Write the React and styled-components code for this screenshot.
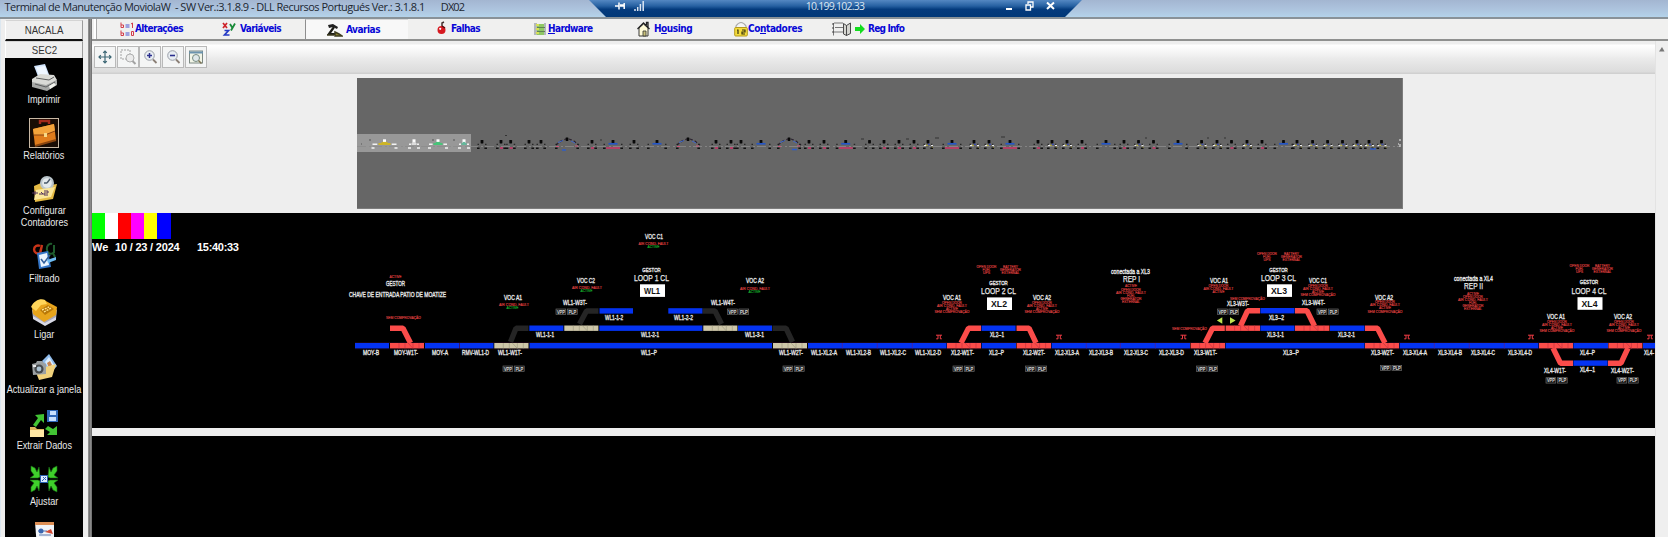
import React from "react";
import styled, { createGlobalStyle, css } from "styled-components";

const Global = createGlobalStyle`
  *{box-sizing:border-box}
  html,body,#root{height:100%}
  body{margin:0;overflow:hidden;background:#eeeeee;font-family:"Liberation Sans",Arial,sans-serif}
  svg{display:block;flex:none}
`;

const Screen = styled.div`display:flex;flex-direction:column;height:537px;width:1668px;overflow:hidden;`;

/* title bar */
const TitleBar = styled.header`
  display:grid;grid-template-columns:589px 493px 1fr;height:19px;flex:none;
  background:linear-gradient(#a3b6d1,#adc4de 55%,#b4d3ea);
  border-bottom:2px solid #899298;
`;
const Caption = styled.div`
  display:flex;align-items:center;gap:16px;height:14px;padding-left:4.5px;color:#1c2630;
  font:11px/14px "Open Sans","Noto Sans",sans-serif;white-space:pre;
`;
const CaptionText = styled.span`letter-spacing:${p => p.$ls}px;`;
const Connection = styled.div`
  display:grid;grid-template-columns:1fr 80px 1fr;height:17px;padding:0 27px 0 26px;
  background:linear-gradient(#5488c2,#2761a2 35%,#043b7d 55%,#003878);
  clip-path:polygon(0 0,100% 0,476px 100%,17px 100%);
  color:#dce6f2;
`;
const Address = styled.div`
  font:10.5px/12px "Open Sans",sans-serif;text-align:center;white-space:nowrap;letter-spacing:-.75px;
`;
const ConnTools = styled.div`
  display:flex;gap:${p => p.$gap}px;height:11px;align-items:center;
  justify-content:${p => (p.$end ? "flex-end" : "flex-start")};
`;

/* body */
const Body = styled.div`display:flex;flex:1;min-height:0;`;
const Sidebar = styled.aside`
  display:flex;flex-direction:column;width:88px;flex:none;padding:1px 5px 0 4px;
  background:#eeeeee;border-left:1px solid #dce7f0;
`;
const Station = styled.div`
  height:${p => p.$h}px;flex:none;display:flex;align-items:center;justify-content:center;
  background:#efefef;border:1px solid #9c9c9c;border-left-color:#fff;border-top-color:#d4d4d4;
  border-bottom:${p => (p.$rule ? "2px solid #111" : "0")};
  font-size:11px;line-height:12px;color:#333;padding-bottom:${p => (p.$rule ? 0 : 1)}px;
  & > span{transform:scaleX(.88);}
`;
const ActionList = styled.nav`
  flex:1;min-height:0;overflow:hidden;background:#000;padding-top:4px;
  display:flex;flex-direction:column;align-items:center;
`;
const Action = styled.div`
  display:flex;flex-direction:column;align-items:center;flex:none;gap:1px;padding-bottom:12.7px;
`;
const ActionIcon = styled.div`
  width:30px;height:30px;border:1px solid ${p => (p.$selected ? "#c8b8a4" : "transparent")};
`;
const ActionLabel = styled.div`
  color:#e9e9e9;font-size:11px;line-height:12px;text-align:center;white-space:pre;transform:scaleX(.83);
`;
const Splitter = styled.div`
  width:4px;flex:none;background:linear-gradient(90deg,#a8a8a8,#6c6c6c 30%,#8c8c8c 60%,#6a6a6a);
`;
const Main = styled.main`display:flex;flex-direction:column;flex:1;min-width:0;`;

/* tabs */
const Tabs = styled.div`
  display:flex;height:22px;flex:none;background:#f0f0ef;border-bottom:2px solid #8f908f;padding-left:2px;
  &::before{content:"";width:2px;background:#fff;border-right:1px solid #aaa;margin-right:-2px;}
`;
const Tab = styled.div`
  display:flex;align-items:center;width:${p => p.$w}px;padding-left:${p => p.$pad}px;gap:${p => p.$gap}px;
  flex:none;
  ${p => p.$active && css`background:#f8f8f8;border-left:1px solid #8e8e8e;border-top:1px solid #d8d8d8;`}
`;
const TabText = styled.span`
  font:bold 10px/14px "DejaVu Sans Condensed","DejaVu Sans",sans-serif;color:#0707d6;white-space:nowrap;
  letter-spacing:${p => p.$ls || -0.6}px;
  u{text-decoration:underline;text-underline-offset:1px;}
`;

/* toolbar */
const Work = styled.div`display:flex;flex:1;min-height:0;`;
const Column = styled.div`display:flex;flex-direction:column;width:1562.5px;flex:none;`;
const Toolbar = styled.div`
  display:flex;gap:.7px;height:33px;flex:none;padding:5px 0 0 2px;
  background:linear-gradient(#eee 0 3px,#fff 4px,#f7f7f7 10px,#eaeaea 18px,#e3e3e3 24px,#dcdcdc 31px,#d0d0d0 32px);
`;
const Tool = styled.div`
  width:22px;height:22px;display:flex;align-items:center;justify-content:center;
  background:#f4f5f5;border:1px solid #b9b9b9;
`;
const ScrollRail = styled.div`
  flex:1;display:flex;justify-content:center;padding-top:5px;background:#efefef;border-left:1px solid #e3e3e3;
`;

/* panels */
const OverviewArea = styled.div`
  height:139px;flex:none;padding:4px 0 0 265px;background:#eee;
`;
const Overview = styled.div`
  width:1046px;height:131px;background:#666;border:1px solid #7c7c7c;border-width:0 1px 1px 0;overflow:hidden;
`;
const Canvas = styled.section`
  display:grid;height:215px;flex:none;background:#000;overflow:hidden;
  & > *{grid-area:1/1;}
`;
const CanvasHeader = styled.div`display:flex;flex-direction:column;`;
const Palette = styled.div`display:flex;height:26px;`;
const Swatch = styled.div`width:13.1px;background:${p => p.$c};`;
const Clock = styled.div`
  display:flex;height:15px;color:#fff;font:bold 11px/16px "Liberation Sans",sans-serif;white-space:pre;
`;
const ClockPart = styled.span`width:${p => p.$w}px;letter-spacing:${p => p.$ls}px;`;
const LowerCanvas = styled.section`flex:1;background:#000;margin-top:8px;`;

const tones = { white: "#e9e9e9", red: "#e04442", green: "#18b82e", black: "#111" };
const Note = styled.text`
  font-family:"Liberation Sans",Arial,sans-serif;font-size:${p => p.$s}px;
  font-weight:${p => (p.$b ? 700 : 400)};fill:${p => tones[p.$t]};text-anchor:middle;
  stroke:${p => tones[p.$t]};stroke-width:${p => (p.$b ? 0 : p.$s > 8 ? 0.25 : p.$s > 5 ? 0.32 : 0.12)}px;
`;

const BLUE = "#0433f2", RED = "#fb4c4a", BEIGE = "#cdc6a8", DARK = "#252525";

function T({ x1, x2, y, s = 6.6, t = "white", b, children }) {
  return (
    <Note $s={s} $t={t} $b={b} x={(x1 + x2) / 2} y={y + s * 0.36}
      textLength={x2 - x1} lengthAdjust="spacingAndGlyphs">{children}</Note>
  );
}

const segments = [
  [355, 389, 343, BLUE], [390, 424, 343, RED], [425, 459, 343, BLUE], [460, 493.5, 343, BLUE],
  [494.3, 528.5, 343, BEIGE], [529.5, 772, 343, BLUE], [773, 807, 343, BEIGE],
  [808, 842, 343, BLUE], [842, 877, 343, BLUE], [877, 912, 343, BLUE], [912, 946.5, 343, BLUE],
  [947, 981, 343, RED], [981.7, 1016, 343, BLUE], [1016.6, 1051, 343, RED],
  [1051.6, 1086.2, 343, BLUE], [1086, 1120.2, 343, BLUE], [1120, 1155.2, 343, BLUE], [1155, 1190, 343, BLUE],
  [1190.6, 1225, 343, RED], [1225.6, 1364.5, 343, BLUE], [1365, 1399, 343, RED],
  [1399.6, 1434.2, 343, BLUE], [1434, 1469.2, 343, BLUE], [1469, 1504.2, 343, BLUE], [1504, 1538.4, 343, BLUE],
  [1539, 1573, 343, RED], [1573.4, 1608, 343, BLUE], [1608.4, 1642.4, 343, RED], [1643, 1655, 343, BLUE],
  [529.3, 563.4, 325.5, BLUE], [564.3, 598.4, 325.5, BEIGE], [599.3, 702.4, 325.5, BLUE],
  [703.3, 737.4, 325.5, BEIGE], [738, 772, 325.5, BLUE],
  [599.5, 633, 308.2, BLUE], [668.3, 702.4, 308.2, BLUE],
  [981.5, 1015.6, 325.5, BLUE],
  [1225.6, 1260, 325.5, RED], [1260.4, 1294.5, 325.5, BLUE], [1295, 1329.4, 325.5, RED], [1330, 1364.5, 325.5, BLUE],
  [1260.4, 1294.5, 308, BLUE], [1573.4, 1607.6, 360.4, BLUE],
];

/* switch legs: stub start, knee, foot */
const legs = [
  [390, 328.2, 403, 410.5, 343, RED],
  [528.5, 328.2, 516, 510.5, 342, DARK],
  [598.5, 311, 586.5, 579.5, 324, DARK],
  [702.5, 311, 715, 721.5, 324, DARK],
  [772.5, 328.2, 786, 792.5, 342, DARK],
  [981, 328.2, 968.5, 961, 343, RED],
  [1016.5, 328.2, 1029, 1036, 343, RED],
  [1224.8, 328.2, 1212.5, 1205, 343, RED],
  [1260, 310.8, 1247.5, 1240.5, 326, RED],
  [1295, 310.8, 1307, 1314.5, 326, RED],
  [1365, 328.2, 1377.5, 1385, 343, RED],
  [1573, 363.2, 1560.5, 1553, 348, RED],
  [1608, 363.2, 1621, 1628, 348, RED],
];

const names = [
  ["MOY-B", 363, 379, 352.7], ["MOY-W1T-", 394, 418, 352.7], ["MOY-A", 432, 448, 352.7], ["RMV-WL1-D", 462, 489, 352.5],
  ["WL1-W1T-", 498, 522, 352.3], ["WL1--P", 641, 657, 352.7], ["WL1-W2T-", 779, 803, 352.3],
  ["WL1-1-1", 536, 554, 334.6], ["WL1-2-1", 641, 659, 334.6], ["WL1-3-1", 745, 764, 334.6],
  ["WL1-1-2", 605, 623, 317.2], ["WL1-2-2", 674, 693, 317.2], ["WL1-W3T-", 563, 587, 303], ["WL1-W4T-", 711, 735, 303],
  ["WL1-XL2-A", 811, 837, 352.4], ["WL1-XL2-B", 846, 871, 352.4], ["WL1-XL2-C", 880, 906, 352.4], ["WL1-XL2-D", 915, 941, 352.4],
  ["XL2-W1T-", 951, 974, 352.2], ["XL2--P", 989, 1004, 352.2], ["XL2-W2T-", 1023, 1045, 352.5],
  ["XL2-XL3-A", 1055, 1079, 352.4], ["XL2-XL3-B", 1089, 1113, 352.4], ["XL2-XL3-C", 1124, 1148, 352.4], ["XL2-XL3-D", 1159, 1184, 352.4],
  ["XL3-W1T-", 1194, 1217, 352.4], ["XL3--P", 1283, 1299, 352.4], ["XL3-W2T-", 1371, 1394, 352.6],
  ["XL3-XL4-A", 1403, 1427, 352.4], ["XL3-XL4-B", 1438, 1462, 352.4], ["XL3-XL4-C", 1471, 1495, 352.4], ["XL3-XL4-D", 1508, 1532, 352.4],
  ["XL4--P", 1580, 1595, 352.2], ["XL4-", 1644, 1654, 352.4],
  ["XL4-W1T-", 1544, 1566, 370.2], ["XL4--1", 1580, 1595, 369.6], ["XL4-W2T-", 1611, 1634, 370.2],
  ["XL2--1", 990, 1004, 334.8], ["XL3--2", 1269, 1284, 317.2], ["XL3-1-1", 1267, 1284, 334.8], ["XL3-2-1", 1338, 1355, 334.8],
  ["XL3-W3T-", 1227, 1249, 303.2], ["XL3-W4T-", 1302, 1325, 302.8],
  ["GESTOR", 386, 405, 283.4], ["CHAVE DE ENTRADA PATIO DE MOATIZE", 349, 446, 294.8],
  ["VOC C1", 645, 663, 236.5], ["VOC C2", 577, 595, 280.6], ["VOC A2", 746, 764, 280.6], ["VOC A1", 504, 522, 297.6],
  ["VOC A1", 943, 961, 297.8], ["VOC A2", 1033, 1051, 297.8], ["VOC A1", 1210, 1228, 281], ["VOC C1", 1309, 1327, 281],
  ["VOC A2", 1375, 1393, 297.6], ["VOC A1", 1547, 1565, 317], ["VOC A2", 1614, 1632, 317],
  ["conectada a XL3", 1111, 1150, 271.8], ["conectada a XL4", 1454, 1493, 279],
];

const loops = [
  ["1", "WL1", 651.5, 277.5], ["2", "XL2", 998.5, 290.6], ["3", "XL3", 1278.5, 277.5], ["4", "XL4", 1589, 290.4],
];

const plates = [
  [503, 366], [783, 366], [556, 309], [727.5, 309], [953, 366], [1025.5, 366], [1196.5, 366],
  [1217.5, 309], [1317, 309], [1380.5, 365.3], [1546, 377.7], [1617, 377.7],
];

const alarms = [
  [395.5, 276.6, ["ACTIVE"]], [403.5, 317.4, ["SEM COMPROVAÇÃO"]],
  [653.5, 244, ["AIR COND. FAULT"]], [587, 288, ["AIR COND. FAULT"]], [755, 288.4, ["AIR COND. FAULT"]], [514, 304.6, ["AIR COND. FAULT"]],
  [986.5, 266.6, ["OPEN DOOR", "FUEL", "UPS"]], [1010.5, 266.6, ["BATTERY", "GENERATOR", "EXTERNAL"]],
  [1267, 253.6, ["OPEN DOOR", "FUEL", "UPS"]], [1291.5, 253.6, ["BATTERY", "GENERATOR", "EXTERNAL"]],
  [1579.5, 265.5, ["OPEN DOOR", "FUEL", "UPS"]], [1602.5, 265.5, ["BATTERY", "GENERATOR", "EXTERNAL"]],
  [952, 302.4, ["OPEN DOOR", "AIR COND. FAULT", "ACTIVE", "SEM COMPROVAÇÃO"]],
  [1042, 302.4, ["OPEN DOOR", "AIR COND. FAULT", "ACTIVE", "SEM COMPROVAÇÃO"]],
  [1131, 286.2, ["ACTIVE", "OPEN DOOR", "AIR COND. FAULT", "FUEL", "GENERATOR", "EXTERNAL"]],
  [1473, 293.4, ["ACTIVE", "OPEN DOOR", "AIR COND. FAULT", "FUEL", "GENERATOR", "EXTERNAL"]],
  [1218.5, 285.4, ["OPEN DOOR", "AIR COND. FAULT", "ACTIVE"]], [1247.5, 298.7, ["SEM COMPROVAÇÃO"]],
  [1189.5, 328.5, ["SEM COMPROVAÇÃO"]],
  [1318, 285.4, ["OPEN DOOR", "AIR COND. FAULT", "ACTIVE", "SEM COMPROVAÇÃO"]],
  [1385, 302, ["OPEN DOOR", "AIR COND. FAULT", "ACTIVE", "SEM COMPROVAÇÃO"]],
  [1557, 321.4, ["OPEN DOOR", "AIR COND. FAULT", "ACTIVE", "SEM COMPROVAÇÃO"]],
  [1624, 321.4, ["OPEN DOOR", "AIR COND. FAULT", "ACTIVE", "SEM COMPROVAÇÃO"]],
];
const alarmWidth = {
  "ACTIVE": 12, "OPEN DOOR": 20, "AIR COND. FAULT": 30, "SEM COMPROVAÇÃO": 35, "FUEL": 8, "UPS": 7,
  "BATTERY": 15, "GENERATOR": 21, "EXTERNAL": 18,
};
const running = [[653.5, 247.2], [586.5, 291.2], [754.5, 291.4], [512.5, 307.7]];
const signals = [936, 1056, 1180.5, 1404, 1528, 1647];

function Schematic() {
  return (
    <svg width="1563" height="215" viewBox="92 213 1563 215">
      <path d="M355 342.6H1655M355 348.9H1655" stroke="#2a0820" strokeWidth=".6" />
      {legs.map(([x, y, k, f, fy, c], i) => (
        <path key={i} d={`M${x} ${y}H${k}L${f} ${fy}`} fill="none" stroke={c} strokeWidth="5.4" strokeLinejoin="bevel" />
      ))}
      {segments.map(([a, b, y, c], i) => (
        <g key={i}>
          <rect x={a} y={y} width={b - a} height="5.4" fill={c} />
          {(c === RED || c === BEIGE) && (
            <path d={`M${a + 9} ${y}v5.4M${a + 15} ${y}v5.4M${a + 18} ${y}l5 5.4M${a + 23} ${y}v5.4M${a + 29} ${y}v5.4`}
              stroke={c === RED ? "#c03040" : "#99957c"} strokeWidth=".6" />
          )}
        </g>
      ))}
      {[459.5, 842.3, 877.3, 912.3, 1086.3, 1120.3, 1155.3, 1434.3, 1469.3, 1504.3].map(x => (
        <path key={x} d={`M${x} 343v5.4`} stroke="#5a1c8c" strokeWidth=".7" />
      ))}
      {names.map(([n, a, b, y], i) => <T key={i} x1={a} x2={b} y={y}>{n}</T>)}
      {loops.map(([n, id, x, y]) => (
        <g key={id}>
          <T x1={x - 9.2} x2={x + 9.2} y={y - 8.1} s={6}>GESTOR</T>
          <T x1={x - 17.5} x2={x + 17.5} y={y} s={8.8}>{`LOOP ${n} CL`}</T>
          <rect x={x - 11.5} y={y + 6.8} width="25" height="12.6" fill="#fff" />
          <T x1={x - 7.5} x2={x + 8.5} y={y + 13.2} s={8.8} b t="black">{id}</T>
        </g>
      ))}
      <T x1={1123} x2={1140} y={278.7} s={8.8}>REP I</T>
      <T x1={1464} x2={1483} y={285.7} s={8.8}>REP II</T>
      {plates.map(([x, y], i) => (
        <g key={i}>
          {["VPP", "PLP"].map((n, k) => (
            <g key={n}>
              <rect x={x + k * 11.4} y={y} width="9.8" height="5.4" fill="#151515" stroke="#777" strokeWidth=".6" />
              <T x1={x + k * 11.4 + 1} x2={x + k * 11.4 + 8.8} y={y + 2.7} s={5}>{n}</T>
            </g>
          ))}
        </g>
      ))}
      {alarms.map(([x, y, lines]) => lines.map((l, i) => (
        <T key={x + l} x1={x - alarmWidth[l] / 2} x2={x + alarmWidth[l] / 2} y={y + i * 3.1} s={3.5} t="red">{l}</T>
      )))}
      {running.map(([x, y]) => <T key={x} x1={x - 6} x2={x + 6} y={y} s={3.5} t="green">ACTIVE</T>)}
      {signals.map(x => (
        <path key={x} d={`M${x} 335.2h6M${x + 2} 335.2v3.6h-1.8M${x + 4.3} 335.2v3.6h1.5`} fill="none" stroke="#f03c44" strokeWidth="1" />
      ))}
      <path d="M1222.3 317.2v6.600l-5.400-3.300zM1230 317.2v6.600l5.600-3.300z" fill="#c0e450" />
    </svg>
  );
}

/* x centre, kind: 0 plain, 1 blue, 2 blue/pink, 3 arc, 4 yellow feet, 5 pink */
const stations = [
  [482, 0], [501, 5], [510.7, 5], [529, 0], [541, 0], [567, 3], [592, 5], [613, 2], [634, 0], [657, 1], [688, 3],
  [716, 5], [731, 5], [741, 0], [761, 1], [789, 3], [809, 5], [824, 5], [845.7, 2], [869.5, 0], [884, 5], [899, 5],
  [914, 5], [928, 4], [952, 2], [974, 4], [989, 4], [1010, 2], [1038, 5], [1052, 4], [1067, 4], [1082, 5], [1106, 1],
  [1124, 5], [1138.5, 4], [1153.5, 5], [1178, 1], [1201.6, 4], [1217, 4], [1231.5, 5], [1247, 4], [1262, 5],
  [1283.5, 1], [1297, 4], [1312.6, 4], [1327.6, 4], [1342.5, 4], [1357, 4], [1369, 4], [1381.5, 4],
];
const lit = [[384.5, "#cdb528", 12], [414, "#dcdcdc", 5], [438, "#48c478", 9], [464, "#65b89c", 5]];

function OverviewMap() {
  return (
    <svg width="1046" height="130" viewBox="357 78 1046 130">
      <rect x="357" y="134" width="114" height="18" fill="#989898" />
      <path d="M357 146.5H1400" stroke="#8c8c8c" strokeWidth=".8" strokeDasharray="9 3 2 2" />
      <path d="M369 140h2M432 140h2M453 140h2M361 144h1M380 151" stroke="#555" />
      {lit.map(([x, c, w]) => (
        <g key={x}>
          <rect x={x - 1.5} y="139.300" width="3" height="3.600" fill="#fff" />
          <path d={`M${x - w} 144.200h${w / 2.5}M${x + w * 0.6} 144.200h${w / 2.5}M${x - w - 1} 148h3M${x + w - 2} 148h3`} stroke="#f2f2f2" strokeWidth="1.400" />
          <path d={`M${x - w / 2} 144h${w}`} stroke={c} strokeWidth="2" />
          <path d={`M${x - w / 4} 142.500h${w / 2}`} stroke={c} strokeWidth="1.200" />
        </g>
      ))}
      {stations.map(([x, k]) => {
        const wide = k === 1 || k === 2, w = wide ? 10 : k === 3 ? 12 : 5;
        return (
          <g key={x}>
            <rect x={x - 1.4} y={k === 3 ? 137.500 : 140} width="2.800" height="3.400" rx=".6" fill="#080808" />
            {k === 3 && <path d={`M${x - 11} 145l5-4 5-2M${x + 2} 139l5 2 5 4`} fill="none" stroke="#2c2430" strokeWidth="1.300" strokeDasharray="3 2" />}
            {k === 3 && <path d={`M${x - 9} 142.500l5-2M${x + 4} 141l4 2`} stroke="#3f66c8" strokeWidth="1" />}
            {k === 3 && <path d={`M${x - 11} 146.500h3M${x + 8} 146h3`} stroke="#d0567a" strokeWidth="1" />}
            {wide && <path d={`M${x - 4.5} 143.800h9`} stroke="#2455c6" strokeWidth="1.700" />}
            {(k === 2 || k === 5) && <path d={`M${x - (wide ? 7 : 1)} 148h${wide ? 14 : 3}`} stroke="#c23a68" strokeWidth="1.700" />}
            {k === 4 && <path d={`M${x - 4} 145.300h2M${x + 3} 145.300h2`} stroke="#e8e8e8" strokeWidth="1.200" />}
            {k === 4 && <path d={`M${x - 2} 145.300h1.600M${x + 4} 147.300h1`} stroke="#bcb53c" strokeWidth="1.200" />}
            {k === 4 && <path d={`M${x} 144.300h2`} stroke="#3c50b4" strokeWidth="1.200" />}
            <path d={`M${x - w} 148.200h2.600M${x + w - 2.6} 148.200h2.600`} stroke="#101010" strokeWidth="1.400" />
            <path d={`M${x - w + 0.5} 144.300h1.500M${x + w - 2} 144.300h1.500`} stroke="#181818" strokeWidth="1" />
          </g>
        );
      })}
      <path d="M505 135.500h2M600 140h2M861 139h3M906 139h3M935 138h4M1001 137h4M1145 138h2M1207 138h2M1224 138h2" stroke="#333" />
      <path d="M1399 140h2M1398 144h1M1400 144v3" stroke="#eee" />
      <path d="M562 150h4M792 149.500h5M1370 149h6" stroke="#2f5ec8" strokeWidth="1.500" />
    </svg>
  );
}

/* sidebar drawings, 28 x 28 */
const art = {
  print: (
    <g>
      <path d="M4 3l11-2 5 13-11 2z" fill="#cfe3fb" /><path d="M6 4l9-1 3 9-9 1z" fill="#eef6ff" />
      <path d="M2 16l8-5 14 1 3 5-10 7L2 20z" fill="#d9dad6" /><path d="M2 19l14 3 11-5v5l-10 6L2 24z" fill="#a6a8a6" />
      <path d="M6 15l13 2 5-3M5 21l11 3 9-5" stroke="#5d5f60" fill="none" /><path d="M19 23l5-3 2 2-6 4z" fill="#f2f3ee" />
    </g>
  ),
  report: (
    <g>
      <rect width="28" height="28" fill="#1a0d05" /><path d="M10 5V2h9v3" fill="none" stroke="#a3281b" strokeWidth="2.4" />
      <path d="M3 10L24 5l2 16L5 27z" fill="#e07c1c" /><path d="M3 10L24 5l1 7-10 4L4 16z" fill="#f4a43c" />
      <path d="M4 16l11 0 10-4" fill="none" stroke="#8a4210" /><path d="M5 27l21-6" stroke="#8c460f" strokeWidth="2" />
      <path d="M14 14h3v4h-3z" fill="#f7d987" />
    </g>
  ),
  counters: (
    <g transform="translate(1 2)">
      <path d="M3 10l7-3 3 3 13-2-4 15-18 3z" fill="#e5bb45" /><circle cx="16" cy="7" r="7" fill="#b9c4ca" />
      <circle cx="16" cy="7" r="4.800" fill="#e3e9ec" /><path d="M16 7l3-4M16 7h-3" stroke="#49596a" strokeWidth="1.400" />
      <path d="M5 14l19-3-4 10-17 3z" fill="#fbe79b" /><path d="M1 17h6M4 15v4M8 18h4l-2-2M13 15h4v2h-4v2h4" stroke="#51305c" fill="none" />
    </g>
  ),
  filter: (
    <g>
      <path d="M10 4a4 4 0 1 0 0 7l2-8-2 9h3" fill="none" stroke="#c93418" strokeWidth="2.4" />
      <path d="M22 2a4 5 0 1 0 1 9l2 4M24 3v8" fill="none" stroke="#1f5d2d" strokeWidth="2" />
      <path d="M7 11l11-2 3 16-12 2z" fill="#3577c9" /><path d="M9 13l8-2 2 12-8 2z" fill="#ecf5ff" />
      <path d="M11 17l3 4 6-8" fill="none" stroke="#315f9d" strokeWidth="1.6" /><path d="M17 18l9-3v3l-8 3z" fill="#6dbaf0" />
    </g>
  ),
  dial: (
    <g>
      <path d="M2 12L15 4l12 8-1 9-11 6L3 20z" fill="#aaa8b9" /><path d="M2 10L14 2l13 7-1 8-12 7L3 16z" fill="#e8a51c" />
      <path d="M1 9c3-7 10-9 14-7l2 4-6 1-5 6z" fill="#ffd65a" /><path d="M10 12l8-5 6 4-9 6z" fill="#b97808" />
      <path d="M12 12l7-3M14 14l7-4" stroke="#ffe58e" strokeDasharray="2 1" strokeWidth="1.4" /><path d="M3 18l12 7 11-6v3l-11 6-12-7z" fill="#d8d9e5" />
    </g>
  ),
  camera: (
    <g>
      <path d="M12 8L19 1l8 12-7 8z" fill="#90bcec" /><path d="M15 9l4-5 5 8-4 5z" fill="#dceefe" />
      <path d="M17 10l3-2 2 4-3 3z" fill="#c78452" /><path d="M5 17l21-6-4 13-13 3z" fill="#f1d27c" />
      <path d="M2 11l4-1 1-2 5 0 2 2 2 1v10l-13 1z" fill="#9ba0a2" /><circle cx="9" cy="16" r="4.6" fill="#464a4d" />
      <circle cx="9" cy="16" r="2.4" fill="#abc2d2" /><rect x="3" y="12" width="3" height="2" fill="#e8e8e8" />
    </g>
  ),
  extract: (
    <g>
      <path d="M17 1h11v12H17z" fill="#2e67b9" /><path d="M20 2h6v4h-6zM19 8h7v4h-7z" fill="#c6dfff" />
      <path d="M5 6l9-1v9l-3-3-5 7-3-2 5-7z" fill="#42c434" /><path d="M27 26H17l3-3-5-3 3-3 5 3 4-3z" fill="#42c434" />
      <path d="M0 18h5l2 2h7v8H0z" fill="#dfb65f" /><path d="M0 21h14v7H0z" fill="#ffe8a5" />
    </g>
  ),
  adjust: (
    <g>
      {["", "matrix(-1 0 0 1 28 0)", "matrix(1 0 0 -1 0 28)", "matrix(-1 0 0 -1 28 28)"].map(m => (
        <path key={m} transform={m || undefined} d="M1 1l4 2 2 4 2-5 1 10-2 1H0l4-3-3-4z" fill="#3fd02b" stroke="#176d14" strokeWidth=".6" />
      ))}
      <rect x="10.5" y="10.5" width="7" height="7" fill="#dcecff" stroke="#2b62b2" /><path d="M12 16l4-4M13 12l3 3" stroke="#2b62b2" />
    </g>
  ),
  page: (
    <g>
      <path d="M5 1h19v26H7z" fill="#f1f4f8" /><path d="M5 1h19v3H5z" fill="#dd8e54" /><path d="M8 10h9M9 14h12" stroke="#8aa0c8" strokeWidth="1.600" />
      <path d="M15 11l6-3 2 5" fill="#d34b36" /><circle cx="11" cy="10" r="2.500" fill="#3a66b0" />
    </g>
  ),
};

const actions = [
  ["print", "Imprimir"], ["report", "Relatórios", true], ["counters", "Configurar\nContadores"], ["filter", "Filtrado"],
  ["dial", "Ligar"], ["camera", "Actualizar a janela"], ["extract", "Extrair Dados"], ["adjust", "Ajustar"], ["page", ""],
];

/* tab drawings */
const Glyph = ({ w, h = 16, children }) => <svg width={w} height={h} viewBox={`0 0 ${w} ${h}`}>{children}</svg>;
const tabArt = {
  alt: (
    <Glyph w={14}>
      <path d="M1 1.500v5h2.500V4H1M1 9.500v5h2.500V12H1M11 3l1.500-1v5M11.500 10.500h2v4h-2z" fill="none" stroke="#d33c48" strokeWidth="1" />
      <path d="M5.500 4h4M5.500 6h4M5.500 12h4M5.500 14h4" stroke="#4b52cf" strokeWidth="1" />
    </Glyph>
  ),
  vars: (
    <Glyph w={14}>
      <path d="M1 2l4 5M5 2l-4 5" stroke="#ce242b" strokeWidth="1.700" />
      <path d="M8 3l2.500 4M13 2.500l-4 7" stroke="#198b38" strokeWidth="1.800" />
      <path d="M2.500 9.500h4l-4 4.500h5" fill="none" stroke="#2339c5" strokeWidth="1.700" />
    </Glyph>
  ),
  faults: (
    <Glyph w={17}>
      <path d="M2 3l5-1 5 3-1 2-4-2-4 1z" fill="#222" /><path d="M8 5L3 12h8" fill="none" stroke="#1d1d16" strokeWidth="2.200" />
      <path d="M1 13h7M9 10l4 2 3 2H9z" stroke="#3e3c20" fill="#8b8030" strokeWidth="1.500" />
    </Glyph>
  ),
  bomb: (
    <Glyph w={10}>
      <path d="M5 5V2l2-1" fill="none" stroke="#443332" strokeWidth="1.500" /><circle cx="4.500" cy="9" r="4" fill="#d71920" />
      <circle cx="3.200" cy="7.800" r="1.100" fill="#fff" /><path d="M5 5l3 2" stroke="#561010" strokeWidth="1.500" />
    </Glyph>
  ),
  hard: (
    <Glyph w={13}>
      <path d="M1 2h3v12H1zM11 2h2v12h-2z" fill="#b4b8bb" /><path d="M4 3h7v3H4zM4 7h7v3H4zM4 11h7v3H4z" fill="#8fc864" />
      <path d="M3 4h3M3 8h3M3 12h3" stroke="#d6df56" strokeWidth="2" /><path d="M4 6.500h8M4 10.500h8" stroke="#607f55" />
    </Glyph>
  ),
  house: (
    <Glyph w={13}>
      <path d="M2 7v8h9V7L6.500 3z" fill="#fffbd6" stroke="#383838" /><path d="M.5 8l6-6 6 6M9.500 4V1.500h1.500V6" fill="none" stroke="#222" strokeWidth="1.300" />
      <path d="M6 10h3v5H6z" fill="#c9c27a" stroke="#333" strokeWidth=".8" />
    </Glyph>
  ),
  count: (
    <Glyph w={14}>
      <path d="M2 8V5q5-7 10 0v3" fill="#f4f4f4" stroke="#a8a8a8" strokeWidth="1.200" /><rect x=".7" y="6.500" width="12.600" height="8.500" rx="1" fill="#f4dc3c" stroke="#b59a1c" />
      <path d="M3 9h1v4M8 9h3v2H8v2h3" fill="none" stroke="#39350f" strokeWidth="1.200" />
    </Glyph>
  ),
  book: (
    <Glyph w={21}>
      <path d="M3 2h9M4 6.500h8M3 11h9M2.500 2v12.500" stroke="#777" fill="none" strokeWidth="1" />
      <path d="M1 3h2M1 7h2M1 11h2" stroke="#444" />
      <path d="M12.500 2.500l3 2v10l-3-1.500zM15.500 4.500l4-2.500v10.500l-4 2z" fill="#d5d5d0" stroke="#4a4a4a" />
    </Glyph>
  ),
};
const GoArrow = () => (
  <Glyph w={10}><path d="M0 6h5V3l5 5-5 5v-3H0z" fill="#13dc1d" /></Glyph>
);

const tabs = [
  { art: "alt", w: 125, pad: 25, gap: 1, text: <>Alterações</>, ls: -0.6 },
  { art: "vars", w: 85, pad: 2, gap: 4, text: <>Variáveis</>, ls: -0.6 },
  { art: "faults", w: 103, pad: 20, gap: 3, text: <>Avarias</>, ls: -0.5, active: true },
  { art: "bomb", w: 95, pad: 29, gap: 4, text: <>Falhas</>, ls: -0.6 },
  { art: "hard", w: 106, pad: 30, gap: 2, text: <><u>H</u>ardware</>, ls: -0.6 },
  { art: "house", w: 97, pad: 28, gap: 4, text: <>H<u>o</u>using</>, ls: -0.45 },
  { art: "count", w: 97, pad: 28, gap: 0, text: <>Co<u>n</u>tadores</>, ls: -0.4 },
  { art: "book", w: 120, pad: 28, gap: 3, text: <>Reg Info</>, ls: -0.8, arrow: true },
];

const lens = <><circle cx="8.500" cy="7.500" r="4.800" fill="#e8edf2" stroke="#9a9fa8" strokeWidth="1" /><path d="M12 11.500l3.500 3.500" stroke="#8b7f76" strokeWidth="1.800" /></>;
const tools = [
  <path key="move" d="M9 3v12M3 9h12M7.200 4.800L9 3l1.800 1.800M7.200 13.200L9 15l1.800-1.800M4.800 7.200L3 9l1.800 1.800M13.200 7.200L15 9l-1.800 1.800" fill="none" stroke="#3b6674" strokeWidth="1.200" />,
  <g key="area" opacity=".75"><path d="M2 2h9v9H2z" fill="none" stroke="#888" strokeDasharray="2 1" /><circle cx="11" cy="10" r="4" fill="#e8e8e8" stroke="#999" /><path d="M13.500 13l3 3" stroke="#888" strokeWidth="2" /></g>,
  <g key="in">{lens}<path d="M6 7.500h5M8.500 5v5" stroke="#2b2f8e" strokeWidth="1.500" /></g>,
  <g key="out">{lens}<path d="M6 7.500h5" stroke="#2b2f8e" strokeWidth="1.600" /></g>,
  <g key="fit"><rect x="2.500" y="3" width="13" height="12" fill="#f2f5e7" stroke="#7d8983" /><path d="M2 4.500h14" stroke="#6b93ae" strokeWidth="2" /><circle cx="9" cy="10" r="3.500" fill="#dfe8ea" stroke="#778b82" /><path d="M11.500 12.500l3 3" stroke="#7c7354" strokeWidth="1.500" /></g>,
];

export default function App() {
  return (
    <Screen>
      <Global />
      <TitleBar>
        <Caption>
          <CaptionText $ls={-0.51}>Terminal de Manutenção MoviolaW  - SW Ver.:3.1.8.9 - DLL Recursos Portugués Ver.: 3.1.8.1</CaptionText>
          <CaptionText $ls={-0.9}>DX02</CaptionText>
        </Caption>
        <Connection>
          <ConnTools $gap={8}>
            <svg width="11" height="10"><path d="M0 5h4M4 1.500v7M5 5h4M9.200 2v6M5 4h4" stroke="#fff" strokeWidth="1.500" /></svg>
            <svg width="11" height="11"><path d="M1 9v2M3.700 7v4M6.400 4v7M9.200 1v10" stroke="#dbe6f4" strokeWidth="1.500" /></svg>
          </ConnTools>
          <Address>10.199.102.33</Address>
          <ConnTools $gap={12} $end>
            <svg width="8" height="9"><path d="M1 8h6" stroke="#fff" strokeWidth="2" /></svg>
            <svg width="9" height="10"><path d="M3 3V1h5v5H6M1 4h4.500v5H1z" fill="none" stroke="#fff" strokeWidth="1.300" /></svg>
            <svg width="9" height="9"><path d="M1 1.500l7 6.500M8 1.500L1 8" stroke="#fff" strokeWidth="2" /></svg>
          </ConnTools>
        </Connection>
      </TitleBar>
      <Body>
        <Sidebar>
          <Station $h={21} $rule><span>NACALA</span></Station>
          <Station $h={17}><span>SEC2</span></Station>
          <ActionList>
            {actions.map(([id, label, selected]) => (
              <Action key={id}>
                <ActionIcon $selected={selected}><svg width="28" height="28" viewBox="0 0 28 28">{art[id]}</svg></ActionIcon>
                <ActionLabel>{label}</ActionLabel>
              </Action>
            ))}
          </ActionList>
        </Sidebar>
        <Splitter />
        <Main>
          <Tabs>
            {tabs.map(t => (
              <Tab key={t.art} $w={t.w} $pad={t.pad} $gap={t.gap} $active={t.active}>
                {tabArt[t.art]}{t.arrow && <GoArrow />}<TabText $ls={t.ls}>{t.text}</TabText>
              </Tab>
            ))}
          </Tabs>
          <Work>
            <Column>
              <Toolbar>
                {tools.map((d, i) => <Tool key={i}><svg width="18" height="18" viewBox="0 0 18 18">{d}</svg></Tool>)}
              </Toolbar>
              <OverviewArea><Overview><OverviewMap /></Overview></OverviewArea>
              <Canvas>
                <Schematic />
                <CanvasHeader>
                  <Palette>{["#00ff00", "#fff", "#ff0000", "#ff00ff", "#ffff00", "#0000ff"].map(c => <Swatch key={c} $c={c} />)}</Palette>
                  <Clock><ClockPart $w={23} $ls={0}>We</ClockPart><ClockPart $w={82} $ls={-0.2}>10 / 23 / 2024</ClockPart><ClockPart $w={50} $ls={-0.3}>15:40:33</ClockPart></Clock>
                </CanvasHeader>
              </Canvas>
              <LowerCanvas />
            </Column>
            <ScrollRail><svg width="6" height="6"><path d="M0 5.500h5.500L3 1z" fill="#777" /></svg></ScrollRail>
          </Work>
        </Main>
      </Body>
    </Screen>
  );
}
